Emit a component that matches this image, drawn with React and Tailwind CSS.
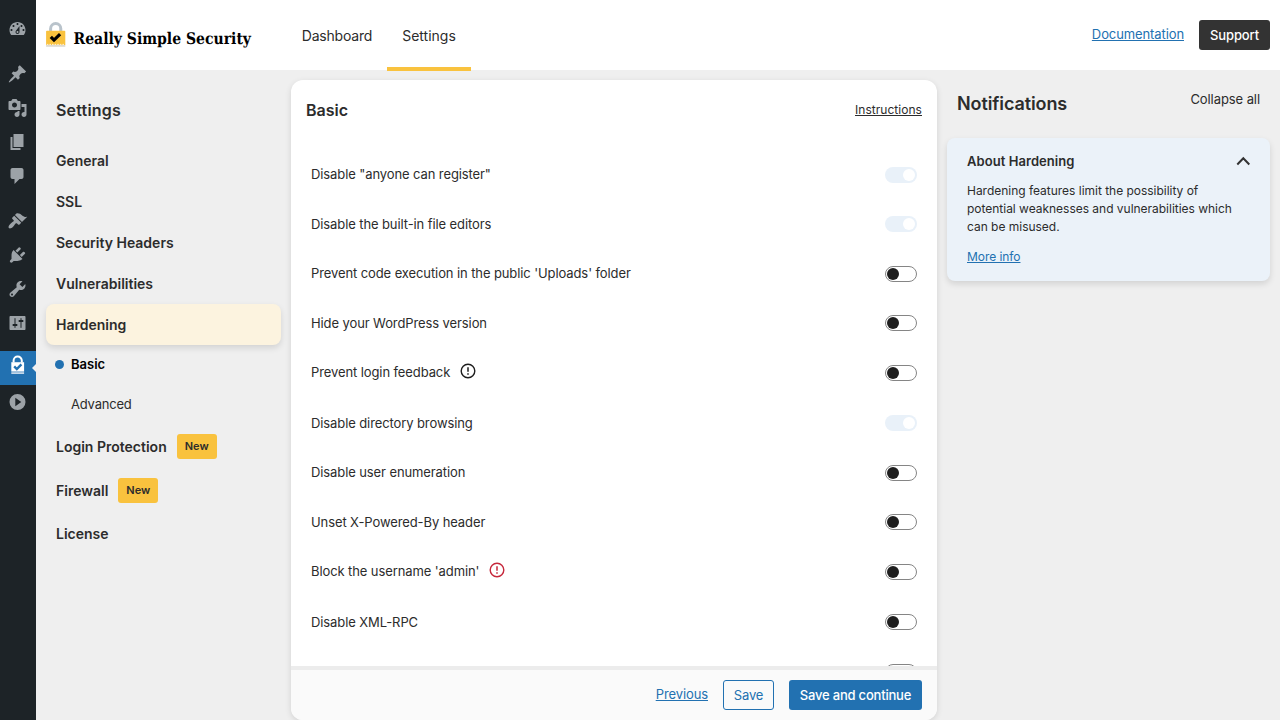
import React, { useState } from "react";

const ICONS = {
  dashboard:
    "M3.76 16h12.48c1.1-1.37 1.76-3.11 1.76-5 0-4.42-3.58-8-8-8s-8 3.58-8 8c0 1.89.66 3.63 1.76 5zM10 4c.55 0 1 .45 1 1s-.45 1-1 1-1-.45-1-1 .45-1 1-1zM6 6c.55 0 1 .45 1 1s-.45 1-1 1-1-.45-1-1 .45-1 1-1zm8 0c.55 0 1 .45 1 1s-.45 1-1 1-1-.45-1-1 .45-1 1-1zm-5.37 5.55L12 7v6c0 1.1-.9 2-2 2s-2-.9-2-2c0-.57.24-1.08.63-1.45zM4 10c.55 0 1 .45 1 1s-.45 1-1 1-1-.45-1-1 .45-1 1-1zm12 0c.55 0 1 .45 1 1s-.45 1-1 1-1-.45-1-1 .45-1 1-1zm-5 3c0-.55-.45-1-1-1s-1 .45-1 1 .45 1 1 1 1-.45 1-1z",
  post: "M10.44 3.02l1.82-1.82 6.36 6.35-1.83 1.82c-1.05-.68-2.48-.57-3.41.36l-.75.75c-.92.93-1.04 2.35-.35 3.41l-1.83 1.82-2.41-2.41-2.8 2.79c-.42.42-3.38 2.71-3.8 2.29s1.86-3.39 2.28-3.81l2.79-2.79L4.1 9.36l1.83-1.82c1.05.69 2.48.57 3.4-.36l.75-.75c.93-.92 1.05-2.35.36-3.41z",
  media:
    "M13 11V4c0-.55-.45-1-1-1h-1.67L9 1H5L3.67 3H2c-.55 0-1 .45-1 1v7c0 .55.45 1 1 1h10c.55 0 1-.45 1-1zM7 4.5c1.38 0 2.5 1.12 2.5 2.5S8.38 9.5 7 9.5 4.5 8.38 4.5 7 5.62 4.5 7 4.5zM14 6h5v10.5c0 1.38-1.12 2.5-2.5 2.5S14 17.88 14 16.5s1.12-2.5 2.5-2.5c.17 0 .34.02.5.05V9h-3V6zm-4 8.05V13h2v3.5c0 1.38-1.12 2.5-2.5 2.5S7 17.88 7 16.5 8.12 14 9.5 14c.17 0 .34.02.5.05z",
  page: "M6 15V2h10v13H6zm-1 1h8v2H3V5h2v11z",
  comments: "M5 2h9c1.1 0 2 .9 2 2v7c0 1.1-.9 2-2 2h-2l-5 5v-5H5c-1.1 0-2-.9-2-2V4c0-1.1.9-2 2-2z",
  appearance:
    "M14.48 11.06L7.41 3.99l1.5-1.5c.5-.56 2.3-.47 3.51.32 1.21.8 1.43 1.28 2.91 2.1 1.18.64 2.45 1.26 4.45.85zm-.71.71L6.7 4.7 4.93 6.47c-.39.39-.39 1.02 0 1.41l1.06 1.06c.39.39.39 1.03 0 1.42-.6.6-1.43 1.11-2.21 1.69-.35.26-.7.53-1.01.84C1.43 14.23.4 16.08 1.4 17.07c.99 1 2.84-.03 4.18-1.36.31-.31.58-.66.85-1.02.57-.78 1.08-1.61 1.69-2.21.39-.39 1.02-.39 1.41 0l1.06 1.06c.39.39 1.02.39 1.41 0z",
  plugins:
    "M13.11 4.36L9.87 7.6 8 5.73l3.24-3.24c.35-.34 1.05-.2 1.56.32.52.51.66 1.21.31 1.55zm-8 1.77l.91-1.12 9.01 9.01-1.19.84c-.71.71-2.63 1.16-3.82 1.16H6.14L4.9 17.26c-.59.59-1.54.59-2.12 0-.59-.58-.59-1.53 0-2.12l1.24-1.24v-3.88c0-1.13.4-3.19 1.09-3.89zm7.26 3.97l3.24-3.24c.34-.35 1.04-.21 1.55.31.52.51.66 1.21.31 1.55l-3.24 3.25z",
  tools:
    "M16.68 9.77c-1.34 1.34-3.3 1.67-4.95.99l-5.41 6.52c-.99.99-2.59.99-3.58 0s-.99-2.59 0-3.57l6.52-5.42c-.68-1.65-.35-3.61.99-4.95 1.28-1.28 3.12-1.62 4.72-1.06l-2.89 2.89 2.82 2.82 2.86-2.87c.53 1.58.18 3.39-1.08 4.65zM3.81 16.21c.4.39 1.04.39 1.43 0 .4-.4.4-1.04 0-1.43-.39-.4-1.03-.4-1.43 0-.39.39-.39 1.03 0 1.43z",
  settings:
    "M18 16V4c0-.55-.45-1-1-1H3c-.55 0-1 .45-1 1v12c0 .55.45 1 1 1h14c.55 0 1-.45 1-1zM8 11h1c.55 0 1 .45 1 1s-.45 1-1 1H8v1.5c0 .28-.22.5-.5.5s-.5-.22-.5-.5V13H6c-.55 0-1-.45-1-1s.45-1 1-1h1V5.5c0-.28.22-.5.5-.5s.5.22.5.5V11zm5-2h-1c-.55 0-1-.45-1-1s.45-1 1-1h1V5.5c0-.28.22-.5.5-.5s.5.22.5.5V7h1c.55 0 1 .45 1 1s-.45 1-1 1h-1v5.5c0 .28-.22.5-.5.5s-.5-.22-.5-.5V9z",
  collapse: "M10 2a8 8 0 1 0 0 16 8 8 0 0 0 0-16zM7.8 5.8v8.4l6-4.2z",
};

const MENU_GROUPS = [
  ["dashboard"],
  ["post", "media", "page", "comments"],
  ["appearance", "plugins", "tools", "settings"],
];

const FIELDS = [
  { id: "register", label: 'Disable "anyone can register"', locked: true, height: "h-[49px]" },
  { id: "editors", label: "Disable the built-in file editors", locked: true, height: "h-[50px]" },
  { id: "uploads", label: "Prevent code execution in the public 'Uploads' folder", height: "h-[49px]" },
  { id: "version", label: "Hide your WordPress version", height: "h-[50px]" },
  { id: "feedback", label: "Prevent login feedback", info: "text-[#1e1e1e]", height: "h-[50px]" },
  { id: "browsing", label: "Disable directory browsing", locked: true, height: "h-[50px]" },
  { id: "enumeration", label: "Disable user enumeration", height: "h-[49px]" },
  { id: "powered", label: "Unset X-Powered-By header", height: "h-[50px]" },
  { id: "admin", label: "Block the username 'admin'", info: "text-[#c6273b]", height: "h-[50px]" },
  { id: "xmlrpc", label: "Disable XML-RPC", height: "h-[50px]" },
  { id: "twofa", label: "", height: "h-[50px]" },
];

function DashIcon({ name }) {
  return (
    <svg viewBox="0.5 0 20 20" className="h-5 w-5" fill="currentColor" fillRule="evenodd">
      <path d={ICONS[name]} />
    </svg>
  );
}

function AdminMenu() {
  return (
    <nav className="flex w-9 shrink-0 flex-col gap-[11px] bg-[#1d2327] pt-3 text-[#9ca2a7]">
      {MENU_GROUPS.map((group) => (
        <div key={group[0]}>
          {group.map((name) => (
            <a key={name} className="flex h-[34px] items-center justify-center">
              <DashIcon name={name} />
            </a>
          ))}
        </div>
      ))}
      <div>
        <a className="flex h-[34px] items-center bg-[#2271b1] text-white">
          <svg viewBox="0 0 36 34" className="h-[34px] w-9">
            <path d="M13.6 11.5V9.6a4.1 4.1 0 0 1 8.2 0v1.9" fill="none" stroke="#fff" strokeWidth="2" />
            <path d="M11.3 11.2h12.8v9.4H11.3z" fill="#fff" />
            <path d="M11.3 21.2h12.8V23H11.3z" fill="#c3d7e9" />
            <path d="M14.2 15.4l2.6 2.6 4.6-4.7" fill="none" stroke="#2271b1" strokeWidth="2.4" />
            <path d="M36 13v8l-4-4z" fill="#f0f0f1" />
          </svg>
        </a>
        <a className="flex h-[34px] items-center justify-center">
          <DashIcon name="collapse" />
        </a>
      </div>
    </nav>
  );
}

function Logo() {
  return (
    <div className="flex items-start gap-2 pt-[22px]">
      <svg viewBox="0 0 20 25" className="h-[25px] w-5">
        <path d="M4.6 10.500V6.700a5.100 5.100 0 0 1 10.200 0v3.800" fill="none" stroke="#b9c3cb" strokeWidth="3" />
        <path d="M.9 8.700h17.600a.8.8 0 0 1 .8.8V23H.1V9.500a.8.8 0 0 1 .8-.8z" fill="#f9c23e" />
        <path d="M.1 23h19.200v1.800H.1z" fill="#dedad0" />
        <path d="M.8 22.400h18" stroke="#fff" strokeWidth=".8" strokeDasharray="1.600 1" />
        <path d="M4.800 14.800l3.200 3.300 6.100-6" fill="none" stroke="#000" strokeWidth="3.200" />
      </svg>
      <svg viewBox="0 0 180 30" className="h-[30px] w-[180px] overflow-visible">
        <text
          x="-0.5"
          y="22"
          textLength="177.500"
          lengthAdjust="spacingAndGlyphs"
          className="font-['DejaVu_Serif',serif] text-[16px] font-bold [text-rendering:geometricPrecision]"
        >
          Really Simple Security
        </text>
      </svg>
    </div>
  );
}

function Header() {
  return (
    <header className="flex h-[70px] shrink-0 bg-white px-2.5">
      <div className="h-[70px] w-[241px]">
        <Logo />
      </div>
      <a className="h-[71px] w-[100px] pt-[26px] text-center text-[14px] leading-5 tracking-[-0.2px]">Dashboard</a>
      <a className="h-[71px] w-[84px] border-b-4 border-[#f9c23e] pt-[26px] text-center text-[14px] leading-5">
        Settings
      </a>
      <div className="ml-auto flex h-[70px] items-center gap-[15px]">
        <a className="text-[13px] tracking-[-0.1px] text-[#2271b1] underline">Documentation</a>
        <button className="h-[30px] w-[71px] rounded-[3px] bg-[#333] pt-px text-[13px] font-medium tracking-[-0.1px] text-white">
          Support
        </button>
      </div>
    </header>
  );
}

function SideItem({ label, isNew, active }) {
  return (
    <a
      className={`flex items-center gap-2.5 rounded-lg px-2.5 text-[14px] font-semibold ${isNew ? "h-11 pb-0.5" : "h-[41px]"} ${
        active ? "bg-[#fcf3df] shadow-[0_3px_6px_rgba(0,0,0,0.12)]" : ""
      }`}
    >
      {label}
      {isNew && (
        <span className="flex h-[25px] items-center rounded-[3px] bg-[#f9c23e] px-2 text-[11px]">New</span>
      )}
    </a>
  );
}

function SideNav() {
  return (
    <aside className="flex w-[235px] shrink-0 flex-col">
      <h1 className="flex h-[60px] items-center px-2.5 text-[16px] font-semibold tracking-[0.2px]">Settings</h1>
      <SideItem label="General" />
      <SideItem label="SSL" />
      <SideItem label="Security Headers" />
      <SideItem label="Vulnerabilities" />
      <SideItem label="Hardening" active />
      <a className="flex h-[39px] items-center gap-[7px] px-[9px] text-[13px] font-semibold text-black">
        <span className="h-[9px] w-[9px] rounded-full bg-[#2271b1]" />
        Basic
      </a>
      <a className="flex h-[41px] items-center px-[25px] text-[13px] tracking-[-0.2px]">Advanced</a>
      <SideItem label="Login Protection" isNew />
      <SideItem label="Firewall" isNew />
      <SideItem label="License" />
    </aside>
  );
}

function Toggle({ checked, locked, onChange }) {
  if (locked) {
    return (
      <span className="flex h-4 w-8 items-center justify-end rounded-full bg-[#e9f1f9] pr-0.5">
        <span className="h-3 w-3 rounded-full bg-white" />
      </span>
    );
  }
  return (
    <button
      onClick={onChange}
      className={`flex h-4 w-8 items-center rounded-full border px-px ${
        checked ? "justify-end border-[#2271b1] bg-[#2271b1]" : "border-[#858585] bg-white"
      }`}
    >
      <span className={`h-3 w-3 rounded-full ${checked ? "bg-white" : "bg-[#1e1e1e]"}`} />
    </button>
  );
}

function InfoIcon({ color }) {
  return (
    <svg viewBox="0 0 16 16" className={`-mt-[5px] h-4 w-4 ${color}`} fill="none" stroke="currentColor">
      <circle cx="8" cy="8" r="6.800" strokeWidth="1.400" />
      <path d="M8 4.300v4.500M8 10.200v1.500" strokeWidth="1.500" />
    </svg>
  );
}

function SettingsPanel() {
  const [values, setValues] = useState({});

  const toggle = (id) => {
    setValues({ ...values, [id]: !values[id] });
  };

  return (
    <main className="flex h-[640px] w-[646px] shrink-0 flex-col overflow-hidden rounded-xl bg-white shadow-[0_2px_6px_rgba(0,0,0,0.12)]">
      <div className="flex h-[60px] shrink-0 items-center justify-between px-[15px]">
        <h2 className="text-[16px] font-semibold">Basic</h2>
        <a className="text-[12px] tracking-[0.04px] underline">Instructions</a>
      </div>
      <div className="h-[526px] shrink-0 overflow-hidden px-5 pt-[27px]">
        {FIELDS.map((field, i) => (
          <div key={field.id} className={`flex items-start justify-between ${field.height}`}>
            <div
              className={`flex h-5 items-center gap-[9.5px] text-[13px] tracking-[-0.1px] ${
                i % 2 ? "-mt-px" : "-mt-0.5"
              }`}
            >
              {field.label}
              {field.info && <InfoIcon color={field.info} />}
            </div>
            <Toggle checked={values[field.id]} locked={field.locked} onChange={() => toggle(field.id)} />
          </div>
        ))}
      </div>
      <div className="flex flex-1 items-center justify-end gap-[15px] border-t-4 border-[#ececec] bg-[#fafafa] px-[15px] text-[13px] tracking-[-0.1px]">
        <a className="text-[#2271b1] underline">Previous</a>
        <button className="h-[30px] w-[51px] rounded-[3px] border border-[#2271b1] pt-px text-[#2271b1]">Save</button>
        <button className="h-[30px] w-[133px] rounded-[3px] bg-[#2271b1] pt-px font-medium tracking-[-0.2px] text-white">
          Save and continue
        </button>
      </div>
    </main>
  );
}

function Notifications() {
  return (
    <aside className="flex w-[323px] shrink-0 flex-col">
      <div className="flex h-[58px] justify-between px-2.5">
        <h2 className="pt-[10px] text-[18px] leading-7 font-semibold tracking-[-0.1px]">Notifications</h2>
        <button className="h-10 text-[13px] tracking-[-0.08px]">Collapse all</button>
      </div>
      <div className="h-[143px] rounded-lg bg-[#ebf2f9] px-5 pt-[14px] shadow-[0_3px_6px_rgba(0,0,0,0.12)]">
        <div className="flex h-5 items-center justify-between">
          <h3 className="text-[13px] font-semibold tracking-[0.06px]">About Hardening</h3>
          <svg viewBox="0 0 14 10" className="-mt-0.5 h-[10px] w-[14px]" fill="none" stroke="#333" strokeWidth="2">
            <path d="M1.300 8.500l6-6.300 6 6.300" />
          </svg>
        </div>
        <p className="mt-[10px] text-[12px] leading-[18px] tracking-[-0.02px]">
          Hardening features limit the possibility of potential weaknesses and vulnerabilities which can be misused.
        </p>
        <a className="mt-3 block text-[12px] leading-[18px] tracking-[-0.06px] text-[#2271b1] underline">More info</a>
      </div>
    </aside>
  );
}

export default function App() {
  return (
    <div className="flex h-[720px] w-[1280px] overflow-hidden bg-[#efefef] font-['Inter',sans-serif] text-[#2c2c2c]">
      <AdminMenu />
      <div className="flex flex-1 flex-col">
        <Header />
        <div className="flex gap-2.5 px-2.5 pt-2.5">
          <SideNav />
          <SettingsPanel />
          <Notifications />
        </div>
      </div>
    </div>
  );
}
